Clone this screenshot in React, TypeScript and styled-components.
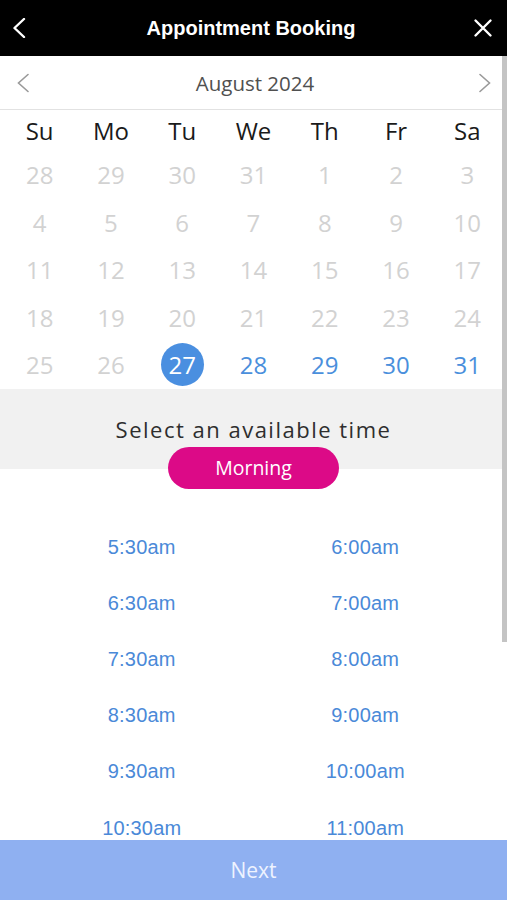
import React, { useState } from 'react';
import styled, { createGlobalStyle } from 'styled-components';

const GlobalStyle = createGlobalStyle`
  html, body {
    margin: 0;
    padding: 0;
    background: #ffffff;
  }
  * {
    box-sizing: border-box;
  }
`;

const dayNames = ['Su', 'Mo', 'Tu', 'We', 'Th', 'Fr', 'Sa'];

// previous month tail + August 2024, only dates from the 27th are bookable
const weeks: number[][] = [
  [28, 29, 30, 31, 1, 2, 3],
  [4, 5, 6, 7, 8, 9, 10],
  [11, 12, 13, 14, 15, 16, 17],
  [18, 19, 20, 21, 22, 23, 24],
  [25, 26, 27, 28, 29, 30, 31],
];

const times = [
  '5:30am',
  '6:00am',
  '6:30am',
  '7:00am',
  '7:30am',
  '8:00am',
  '8:30am',
  '9:00am',
  '9:30am',
  '10:00am',
  '10:30am',
  '11:00am',
];

type DayState = 'disabled' | 'available' | 'selected';

const App = () => {
  const [selected, setSelected] = useState(27);

  const getState = (week: number, day: number): DayState => {
    if (week < 4 || day < 27) return 'disabled';
    return day === selected ? 'selected' : 'available';
  };

  return (
    <Screen>
      <GlobalStyle />
      <TopBar>
        <BarButton aria-label="Back">
          <svg width="14" height="20" viewBox="0 0 14 20">
            <path
              d="M12 1 L2.5 10 L12 19"
              fill="none"
              stroke="#fff"
              strokeWidth="2.4"
              strokeLinecap="round"
              strokeLinejoin="round"
            />
          </svg>
        </BarButton>
        <BarTitle>Appointment Booking</BarTitle>
        <BarButton aria-label="Close">
          <svg width="20" height="20" viewBox="0 0 20 20">
            <path
              d="M2.5 2.5 L17.5 17.5 M17.5 2.5 L2.5 17.5"
              fill="none"
              stroke="#fff"
              strokeWidth="2.4"
              strokeLinecap="round"
            />
          </svg>
        </BarButton>
      </TopBar>

      <Body>
        <MonthRow>
          <MonthArrow aria-label="Previous month">
            <svg width="12" height="20" viewBox="0 0 12 20">
              <path
                d="M11 1.5 L1.5 10 L11 18.5"
                fill="none"
                stroke="#9a9a9a"
                strokeWidth="1.6"
                strokeLinecap="round"
              />
            </svg>
          </MonthArrow>
          <MonthLabel>August 2024</MonthLabel>
          <MonthArrow aria-label="Next month">
            <svg width="12" height="20" viewBox="0 0 12 20">
              <path
                d="M1 1.5 L10.5 10 L1 18.5"
                fill="none"
                stroke="#9a9a9a"
                strokeWidth="1.6"
                strokeLinecap="round"
              />
            </svg>
          </MonthArrow>
        </MonthRow>

        <Grid>
          {dayNames.map((d) => (
            <DayName key={d}>{d}</DayName>
          ))}
          {weeks.map((week, wi) =>
            week.map((day, di) => {
              const state = getState(wi, day);
              return (
                <DateCell key={`${wi}-${di}`}>
                  <DateNumber
                    $state={state}
                    onClick={() => state !== 'disabled' && setSelected(day)}
                  >
                    {day}
                  </DateNumber>
                </DateCell>
              );
            })
          )}
        </Grid>

        <TimeHeader>
          <TimeTitle>Select an available time</TimeTitle>
          <PeriodPill>Morning</PeriodPill>
        </TimeHeader>

        <Slots>
          {times.map((t) => (
            <Slot key={t}>{t}</Slot>
          ))}
        </Slots>

        <ScrollThumb />
      </Body>

      <NextButton>Next</NextButton>
    </Screen>
  );
};

const Screen = styled.div`
  width: 507px;
  height: 900px;
  display: flex;
  flex-direction: column;
  overflow: hidden;
  background: #ffffff;
`;

const TopBar = styled.header`
  height: 56px;
  flex-shrink: 0;
  background: #000000;
  display: flex;
  align-items: center;
  justify-content: space-between;
  padding: 0 12px 0 7px;
`;

const BarButton = styled.button`
  width: 24px;
  height: 24px;
  padding: 0;
  border: none;
  background: transparent;
  display: flex;
  align-items: center;
  justify-content: center;
`;

const BarTitle = styled.h1`
  margin: 0;
  font-family: 'Liberation Sans', Arial, sans-serif;
  font-size: 20px;
  font-weight: 700;
  color: #ffffff;
`;

const Body = styled.main`
  position: relative;
  flex: 1;
  overflow: hidden;
`;

const ScrollThumb = styled.div`
  position: absolute;
  top: 0;
  right: 0;
  width: 5px;
  height: 586px;
  background: #c4c4c4;
`;

const MonthRow = styled.div`
  height: 54px;
  display: flex;
  align-items: center;
  justify-content: space-between;
  padding: 0 10px 0 16px;
  margin-right: 5px;
  border-bottom: 1px solid #e2e2e2;
`;

const MonthArrow = styled.button`
  width: 14px;
  height: 24px;
  padding: 0;
  border: none;
  background: transparent;
  display: flex;
  align-items: center;
  justify-content: center;
`;

const MonthLabel = styled.div`
  margin-left: 2px;
  font-family: 'Open Sans', sans-serif;
  font-size: 20.5px;
  color: #505050;
`;

const Grid = styled.div`
  display: grid;
  grid-template-columns: repeat(7, 1fr);
  grid-template-rows: 41px;
  grid-auto-rows: 47.5px;
  padding: 0 4px;
`;

const DayName = styled.div`
  display: flex;
  align-items: center;
  justify-content: center;
  font-family: 'Open Sans', sans-serif;
  font-size: 24px;
  color: #1a1a1a;
`;

const DateCell = styled.div`
  display: flex;
  align-items: center;
  justify-content: center;
`;

const DateNumber = styled.div<{ $state: DayState }>`
  width: 43px;
  height: 43px;
  border-radius: 50%;
  display: flex;
  align-items: center;
  justify-content: center;
  font-family: 'Open Sans', sans-serif;
  font-size: 24px;
  cursor: ${(p) => (p.$state === 'disabled' ? 'default' : 'pointer')};
  background: ${(p) => (p.$state === 'selected' ? '#4a8fe0' : 'transparent')};
  color: ${(p) =>
    p.$state === 'selected'
      ? '#ffffff'
      : p.$state === 'available'
      ? '#4a8fdc'
      : '#d2d2d2'};
`;

const TimeHeader = styled.section`
  display: flex;
  flex-direction: column;
  align-items: center;
  padding-top: 25px;
  background: linear-gradient(#f1f1f1 0 79.5px, #ffffff 79.5px);
`;

const TimeTitle = styled.div`
  font-family: 'Open Sans', sans-serif;
  font-size: 22px;
  line-height: 30px;
  letter-spacing: 1.5px;
  color: #2e2e2e;
`;

const PeriodPill = styled.button`
  margin-top: 3px;
  width: 171px;
  height: 42px;
  border: none;
  border-radius: 21px;
  background: #dc0a87;
  color: #ffffff;
  font-family: 'Open Sans', sans-serif;
  font-size: 19.5px;
  padding: 0;
`;

const Slots = styled.div`
  display: grid;
  grid-template-columns: 1fr 1fr;
  grid-auto-rows: 56.2px;
  margin-top: 30.5px;
  padding: 0 30px;
`;

const Slot = styled.div`
  display: flex;
  align-items: center;
  justify-content: center;
  font-family: 'Liberation Sans', Arial, sans-serif;
  font-size: 20px;
  letter-spacing: 0.2px;
  color: #4a89d8;
  cursor: pointer;
`;

const NextButton = styled.button`
  height: 60px;
  flex-shrink: 0;
  width: 100%;
  border: none;
  background: #8fb0f1;
  color: #eef3ff;
  font-family: 'Open Sans', sans-serif;
  font-size: 21px;
  padding: 0;
`;

export default App;
